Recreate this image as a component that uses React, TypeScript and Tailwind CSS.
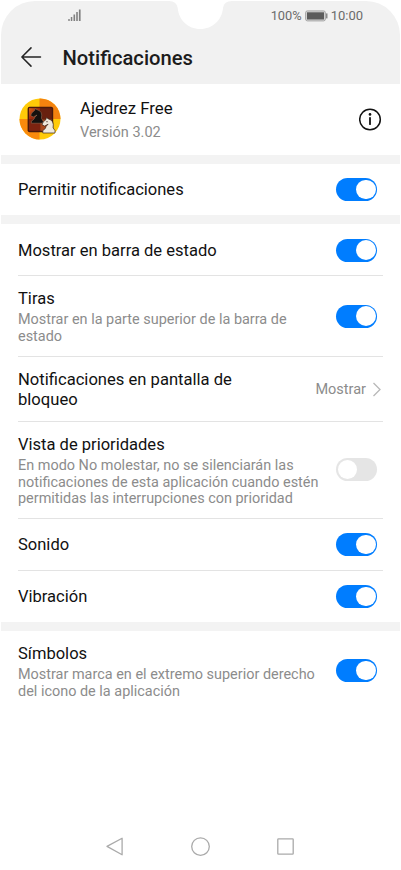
import type { ReactNode } from "react";
import clsx from "clsx";

interface SettingRowProps {
  title: string;
  description?: string;
  className?: string;
  children: ReactNode;
}

function Toggle({ on = false }: { on?: boolean }) {
  return (
    <span
      role="switch"
      aria-checked={on}
      className={clsx(
        "flex h-[23px] w-[41px] shrink-0 items-center rounded-full px-[1.5px]",
        on ? "justify-end bg-[#007dff]" : "mb-px justify-start bg-[#e5e5e5]"
      )}
    >
      <span className="size-[19.5px] rounded-full bg-white" />
    </span>
  );
}

function SettingRow({ title, description, className, children }: SettingRowProps) {
  return (
    <div className={clsx("flex items-center justify-between pr-[6px]", className)}>
      <div className={clsx("w-[304px]", description && "pt-[3px]")}>
        <h2 className="text-[16.55px] leading-[19px] text-[#111]">{title}</h2>
        {description && (
          <p className="mt-1 text-[14.44px] leading-[16.7px] whitespace-pre-line text-[#8c8c8c]">{description}</p>
        )}
      </div>
      {children}
    </div>
  );
}

function StatusBar() {
  return (
    <div className="flex h-[30px] items-center justify-between pr-[37px] pl-[67px] text-[13px] text-[#6b6b6b]">
      <svg className="-mt-0.5" width="13" height="12" viewBox="0 0 13 12" fill="#808080">
        <rect x="0.3" y="10" width="1.4" height="2" />
        <rect x="2.8" y="8" width="1.5" height="4" />
        <rect x="5.5" y="5.5" width="1.6" height="6.5" />
        <rect x="8.2" y="3" width="1.6" height="9" />
        <rect x="10.9" y="0.5" width="1.7" height="11.5" />
      </svg>
      <div className="flex items-center">
        <span className="text-[12.8px]">100%</span>
        <svg className="mr-[3px] ml-[3px]" width="23" height="12" viewBox="0 0 23 12">
          <rect x="0.6" y="0.9" width="19.8" height="10" rx="1.8" fill="#d5d5d5" stroke="#a6a6a6" />
          <rect x="2" y="2.3" width="17" height="7.2" fill="#5c5c5c" />
          <rect x="21.2" y="3.4" width="1.2" height="5" fill="#707070" />
        </svg>
        <span>10:00</span>
      </div>
    </div>
  );
}

function ChessIcon() {
  return (
    <svg width="42" height="42" viewBox="0 0 42 42">
      <defs>
        <clipPath id="disc">
          <circle cx="21" cy="21" r="20.5" />
        </clipPath>
        <linearGradient id="board" x1="0" y1="0" x2="1" y2="1">
          <stop offset="0" stopColor="#d9661c" />
          <stop offset=".45" stopColor="#a32d0e" />
          <stop offset="1" stopColor="#6b1a0c" />
        </linearGradient>
      </defs>
      <g clipPath="url(#disc)">
        <rect width="42" height="42" fill="#ffcb08" />
        <rect x="20.5" width="21.5" height="21" fill="#f4820f" />
        <rect y="21" width="20.5" height="21" fill="#f98a0c" />
      </g>
      <rect x="8.6" y="8.8" width="25.6" height="25.4" rx="2" fill="#49190b" />
      <rect x="10" y="10.2" width="11.3" height="11.3" fill="url(#board)" />
      <rect x="21.3" y="10.2" width="11.5" height="11.3" fill="#68200f" />
      <rect x="10" y="21.5" width="11.3" height="11.3" fill="#7d2310" />
      <rect x="21.3" y="21.5" width="11.5" height="11.3" fill="#a8481a" />
      <path
        d="M12.4 25.2V23.2L15 21.2Q15.3 19.2 18 17L14.2 19L11.7 17.5Q12.4 14.3 15.6 12.4L16 10.6L18.2 11.8Q24 13.2 22.4 20.3L24.2 23.2V25.2Z"
        fill="#15100e"
        stroke="#b48e70"
        strokeWidth=".4"
      />
      <path
        d="M23.8 35V32.6L26.3 30.5Q26.5 28.3 29.1 26.2L25.5 28.1L23 26.6Q24 23.2 27 21.5L27.4 19.5L29.4 20.9Q35.4 22.3 34.1 29.8L36 32.6V35Z"
        fill="#efe9db"
        stroke="#3a281f"
        strokeWidth=".7"
      />
      <circle cx="28" cy="23.7" r=".6" fill="#3a281f" />
    </svg>
  );
}

function Header() {
  return (
    <header className="relative h-[82.5px] rounded-t-[34px] bg-[#f1f1f1]">
      <svg className="absolute top-0 left-[168px]" width="63" height="29" viewBox="0 0 63 29">
        <path d="M0 0Q7.5 0 8.7 7C9.7 19 19 28 31.3 28S53 19 54 7Q55 0 63 0Z" fill="#fff" />
      </svg>
      <StatusBar />
      <div className="flex h-[52px] items-center">
        <svg
          className="ml-5"
          width="21"
          height="20"
          viewBox="0 0 21 20"
          fill="none"
          stroke="#252525"
          strokeWidth="1.5"
          strokeLinecap="round"
          strokeLinejoin="round"
        >
          <path d="M10 .9.9 10 10 19.1M1 10H19.5" />
        </svg>
        <h1 className="ml-[20.5px] pt-[3px] text-[20.2px] font-medium text-[#1c1c1c]">Notificaciones</h1>
      </div>
    </header>
  );
}

function Gap() {
  return <div className="h-[9px] shrink-0 bg-[#f3f3f3]" />;
}

export default function App() {
  return (
    <main className="flex h-[870px] w-[401px] flex-col bg-white px-px pt-px font-[Roboto,sans-serif]">
      <Header />

      <div className="flex h-[71.5px] items-center px-[18px]">
        <ChessIcon />
        <div className="ml-[19px] flex-1 pt-[2px]">
          <p className="text-[16.8px] leading-[19px] text-[#111]">Ajedrez Free</p>
          <p className="mt-[5px] text-[14.5px] leading-[19px] text-[#8c8c8c]">Versión 3.02</p>
        </div>
        <svg width="23" height="23" viewBox="0 0 23 23" fill="none" stroke="#111">
          <circle cx="11" cy="11.5" r="10.3" strokeWidth="1.5" />
          <path d="M11 9.8V16.2" strokeWidth="1.8" strokeLinecap="round" />
          <circle cx="11" cy="6.4" r="1.3" fill="#111" stroke="none" />
        </svg>
      </div>

      <Gap />
      <div className="px-[17px]">
        <SettingRow title="Permitir notificaciones" className="h-[51px]">
          <Toggle on />
        </SettingRow>
      </div>
      <Gap />

      <div className="divide-y divide-[#e3e3e3] px-[17px]">
        <SettingRow title="Mostrar en barra de estado" className="h-[52px] pt-px">
          <Toggle on />
        </SettingRow>
        <SettingRow
          title="Tiras"
          description={"Mostrar en la parte superior de la barra de\nestado"}
          className="h-[81px]"
        >
          <Toggle on />
        </SettingRow>
        <div className="flex h-[65px] items-center justify-between pr-px">
          <h2 className="w-[230px] pt-px text-[16.6px] leading-[19.5px] text-[#111]">
            Notificaciones en pantalla de bloqueo
          </h2>
          <div className="flex items-center gap-[6px]">
            <span className="pt-[2px] text-[14.5px] text-[#8c8c8c]">Mostrar</span>
            <svg width="10" height="15" viewBox="0 0 10 15" fill="none" stroke="#b8b8b8" strokeWidth="1.3">
              <path d="M1.5 1 8 7.5 1.5 14" />
            </svg>
          </div>
        </div>
        <SettingRow
          title="Vista de prioridades"
          description={
            "En modo No molestar, no se silenciarán las\nnotificaciones de esta aplicación cuando estén\npermitidas las interrupciones con prioridad"
          }
          className="h-[97px]"
        >
          <Toggle />
        </SettingRow>
        <SettingRow title="Sonido" className="h-[52px]">
          <Toggle on />
        </SettingRow>
        <SettingRow title="Vibración" className="h-[51px]">
          <Toggle on />
        </SettingRow>
      </div>

      <Gap />
      <div className="px-[17px]">
        <SettingRow
          title="Símbolos"
          description={"Mostrar marca en el extremo superior derecho\ndel icono de la aplicación"}
          className="h-[79px]"
        >
          <Toggle on />
        </SettingRow>
      </div>

      <nav className="mt-auto flex h-[47px] items-center justify-between px-[105px]">
        <svg width="18" height="20" viewBox="0 0 18 20" fill="none" stroke="#aaa" strokeWidth="1.3" strokeLinejoin="round">
          <path d="M16.1 1.2V17.8L1 9.4Z" />
        </svg>
        <svg width="20" height="20" viewBox="0 0 20 20" fill="none" stroke="#aaa" strokeWidth="1.3">
          <circle cx="9.5" cy="9.6" r="8.8" />
        </svg>
        <svg width="18" height="18" viewBox="0 0 18 18" fill="none" stroke="#aaa" strokeWidth="1.3">
          <rect x=".8" y=".8" width="15.4" height="15.4" rx=".7" />
        </svg>
      </nav>
    </main>
  );
}
